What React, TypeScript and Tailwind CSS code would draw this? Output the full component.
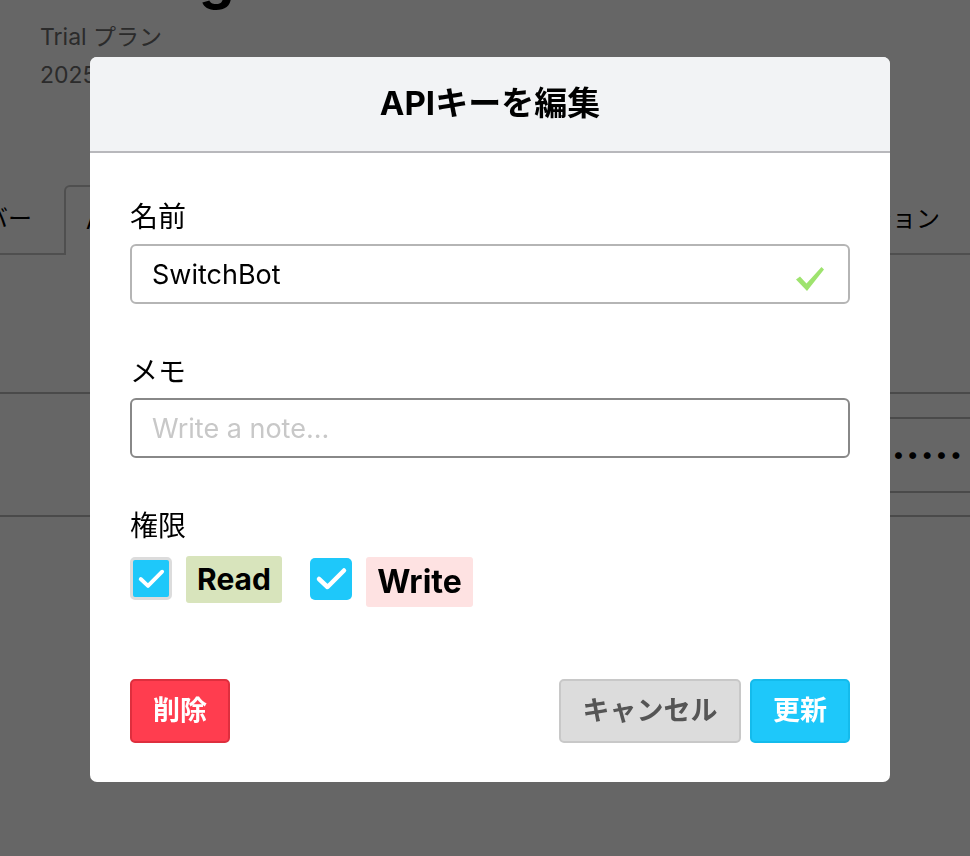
import React from 'react'

const tabs = [
  { label: 'メンバー', active: false },
  { label: 'APIキー', active: true },
  { label: '請求情報', active: false },
  { label: 'プラン', active: false },
]

function CheckBox({ focused }: { focused?: boolean }) {
  return (
    <span
      className={
        focused
          ? 'flex h-[43px] w-[42px] items-center justify-center rounded-[5px] border-[3px] border-[#dcdcdc] bg-[#1ec8fa]'
          : 'flex h-[42px] w-[42px] items-center justify-center rounded-[5px] bg-[#1ec8fa]'
      }
    >
      <svg viewBox="0 0 42 42" className={focused ? 'h-[36px] w-[36px]' : 'h-[42px] w-[42px]'}>
        <path d="M9 21 L17.5 29 L34 12.5" fill="none" stroke="#fff" strokeWidth="4.5" strokeLinecap="round" strokeLinejoin="round" />
      </svg>
    </span>
  )
}

export default function App() {
  return (
    <div className="relative h-[856px] w-full overflow-hidden bg-white font-['Inter','Noto_Sans_CJK_JP',sans-serif] text-black">
      {/* page behind the dialog */}
      <div className="px-10">
        <h1 className="-mt-[52px] text-[56px] font-bold leading-[60px]">Settings</h1>
        <p className="mt-[10px] text-[23px] leading-[38px] text-[#6b6b6b]">Trial プラン</p>
        <p className="text-[23px] leading-[38px] text-[#6b6b6b]">2025年12月31日まで</p>
      </div>

      <div className="mt-[91px] flex h-[70px] items-stretch">
        {tabs.map((t, i) => (
          <div
            key={t.label}
            className={
              t.active
                ? 'flex items-center rounded-t-[6px] border-2 border-b-0 border-[#c6c6c6] px-[20px] text-[24px]'
                : 'flex items-center border-b-2 border-[#c6c6c6] px-[32px] text-[24px] ' + (i === 0 ? '-ml-[96px]' : '')
            }
          >
            {t.label}
          </div>
        ))}
        <div className="flex-1 border-b-2 border-[#c6c6c6]" />
        <div className="flex items-center border-b-2 border-[#c6c6c6] pl-[32px] pr-[30px] text-[24px]">
          インテグレーション
        </div>
      </div>

      <div className="mt-[137px] flex h-[125px] items-center border-y-2 border-[#b9b9b9] pl-10">
        <div className="-mr-[120px] ml-auto flex h-[76px] w-[520px] items-center justify-end border-2 border-[#b9b9b9] pr-[124px] text-[22px] tracking-[2px]">
          ••••••••••••••••••••
        </div>
      </div>

      {/* overlay + dialog */}
      <div className="fixed inset-0 flex items-start justify-center bg-black/60 pl-[10px] pt-[57px]">
        <div className="w-[800px] overflow-hidden rounded-[7px] bg-white">
          <div className="flex h-[96px] items-center justify-center border-b-2 border-[#b8b8bc] bg-[#f2f3f5]">
            <h2 className="text-[33px] font-bold">APIキーを編集</h2>
          </div>

          <div className="px-10 pb-[39px] pt-[48px]">
            <label className="block text-[28px] leading-[32px]">名前</label>
            <div className="relative mt-[11px]">
              <input
                readOnly
                value="SwitchBot"
                className="h-[60px] w-full rounded-[6px] border-2 border-[#b5b5b5] px-[20px] text-[27px] outline-none"
              />
              <svg viewBox="0 0 30 26" className="absolute right-[25px] top-[22px] h-[26px] w-[30px]">
                <path d="M1 13.5 L5 10.5 L11.5 17.5 L26.5 1 L29 3.5 L12 25 Z" fill="#9ee36e" />
              </svg>
            </div>

            <label className="mt-[52px] block text-[28px] leading-[32px]">メモ</label>
            <input
              readOnly
              placeholder="Write a note..."
              className="mt-[10px] h-[60px] w-full rounded-[6px] border-2 border-[#888] px-[20px] text-[27px] outline-none placeholder:text-[#c8c8c8]"
            />

            <label className="mt-[52px] block text-[28px] leading-[32px]">権限</label>
            <div className="mt-[14px] flex items-start">
              <span className="mt-[1px]">
                <CheckBox focused />
              </span>
              <span className="ml-[14px] flex h-[47px] w-[96px] items-center justify-center rounded-[3px] bg-[#d8e4bc] text-[30px] font-bold">
                Read
              </span>
              <span className="ml-[28px] mt-[2px]">
                <CheckBox />
              </span>
              <span className="ml-[14px] mt-[1px] flex h-[50px] w-[107px] items-center justify-center rounded-[3px] bg-[#fee2e2] text-[32px] font-bold">
                Write
              </span>
            </div>

            <div className="mt-[72px] flex items-center">
              <button className="h-[64px] w-[100px] rounded-[5px] border-2 border-[#de2f3e] bg-[#ff3d4f] text-[27px] font-bold text-white">
                削除
              </button>
              <div className="ml-auto flex gap-[9px]">
                <button className="h-[64px] w-[182px] rounded-[5px] border-2 border-[#c8c8c8] bg-[#dcdcdc] text-[27px] font-bold text-[#555]">
                  キャンセル
                </button>
                <button className="h-[64px] w-[100px] rounded-[5px] border-2 border-[#14bbec] bg-[#1ec8fa] text-[27px] font-bold text-white">
                  更新
                </button>
              </div>
            </div>
          </div>
        </div>
      </div>
    </div>
  )
}
